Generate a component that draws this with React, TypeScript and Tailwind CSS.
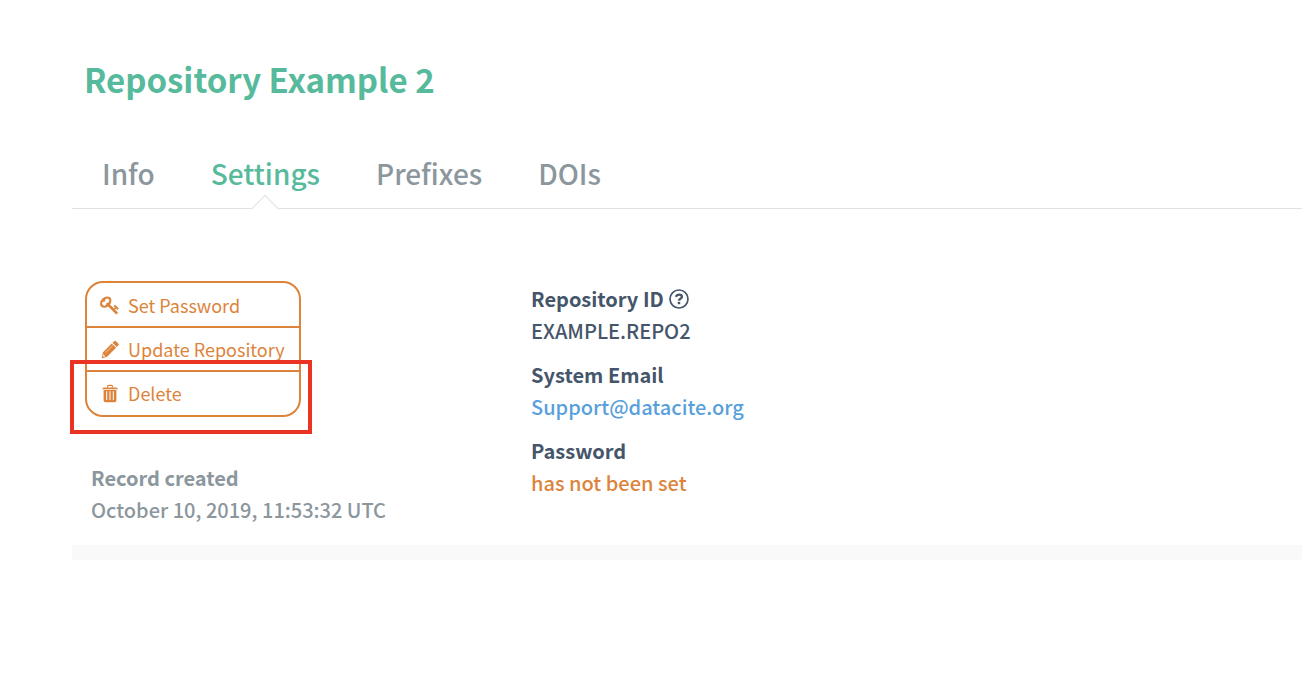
import type { ReactNode } from "react";

const tabs = [
  { label: "Info", active: false },
  { label: "Settings", active: true },
  { label: "Prefixes", active: false },
  { label: "DOIs", active: false },
];

function KeyIcon() {
  return (
    <svg viewBox="0 0 1792 1792" className="h-[22px] w-5" fill="currentColor" aria-hidden="true">
      <path d="M832 512q0-80-56-136t-136-56-136 56-56 136q0 42 19 83-41-19-83-19-80 0-136 56t-56 136 56 136 136 56 136-56 56-136q0-42-19-83 41 19 83 19 80 0 136-56t56-136zm851 704q0 17-49 66t-66 49q-9 0-28.5-16t-36.5-33-38.5-40-24.5-26l-96 96 220 220q28 28 28 68 0 42-39 81t-81 39q-40 0-68-28l-671-671q-176 131-365 131-163 0-265.5-102.5t-102.5-265.5q0-160 95-313t248-248 313-95q163 0 265.5 102.5t102.5 265.5q0 189-131 365l355 355 96-96q-3-3-26-24.5t-40-38.5-33-36.5-16-28.5q0-17 49-66t66-49q13 0 23 10 6 6 46 44.5t82 79.5 86.5 86 73 78 28.5 41z" />
    </svg>
  );
}

function PencilIcon() {
  return (
    <svg viewBox="0 0 20 20" className="h-5 w-5" aria-hidden="true">
      <path
        fill="currentColor"
        d="M14 2.4q1.1-1.1 2.2 0l2.1 2.1q1.1 1 0 2l-1.5 1.6-4.4-4.3zM11.7 4.4l4.4 4.4-9 9-5.4 1.7 1.1-6z"
      />
      <path d="M5.4 13.8l7.4-7.3" stroke="#fff" strokeOpacity="0.65" strokeWidth="0.8" />
      <path d="M3.2 15.1l2.3 2.3-1.9.6-1-1z" fill="#fff" fillOpacity="0.75" />
    </svg>
  );
}

function TrashIcon() {
  return (
    <svg viewBox="0 0 20 20" className="h-5 w-5" fill="none" stroke="currentColor" aria-hidden="true">
      <path d="M7.6 4.6V3.2q0-.9.9-.9h3q.9 0 .9.9v1.4" strokeWidth="1.3" />
      <path d="M2.2 6.2q0-1.8 1.8-1.8h12q1.8 0 1.8 1.8z" fill="currentColor" stroke="none" />
      <path
        fill="currentColor"
        stroke="none"
        fillRule="evenodd"
        d="M3.6 6.9h12.8v10.6q0 1.7-1.8 1.7H5.4q-1.8 0-1.8-1.7zM6.2 8.3v8.8h1V8.3zM9.5 8.3v8.8h1V8.3zM12.8 8.3v8.8h1V8.3z"
      />
    </svg>
  );
}

function HelpIcon() {
  return (
    <svg viewBox="0 0 20 20" className="h-5 w-5" fill="none" stroke="currentColor" aria-hidden="true">
      <circle cx="10" cy="10" r="9" strokeWidth="1.7" />
      <path
        d="M6.7 7.8Q7.8 5.6 10.1 5.6q2.8 0 2.8 2.2 0 1.2-1.5 2-1.3.7-1.3 1.9"
        strokeWidth="2.4"
      />
      <path d="M10 12.9v2.3" strokeWidth="2.5" />
    </svg>
  );
}

const actions = [
  { label: "Set Password", icon: <KeyIcon />, marked: false },
  { label: "Update Repository", icon: <PencilIcon />, marked: false },
  { label: "Delete", icon: <TrashIcon />, marked: true },
];

function Field({ label, children }: { label: ReactNode; children: ReactNode }) {
  return (
    <div className="mb-3">
      <dt className="flex items-center gap-[5px] font-bold">{label}</dt>
      <dd className="font-medium">{children}</dd>
    </div>
  );
}

export default function App() {
  return (
    <main className="overflow-hidden bg-white pt-[55px] pl-18 font-['Noto_Sans_CJK_JP','Noto_Sans_CJK_SC',sans-serif] text-[#45556a]">
      <h1 className="pl-3 text-[33px] leading-12 font-bold text-[#57ba9c]">
        Repository Example 2
      </h1>

      <nav className="mt-[46px] flex border-b border-[#dfe2e4] pb-[11px] pl-[2px] text-[28px] leading-12 font-medium">
        {tabs.map((tab) => (
          <a
            key={tab.label}
            href="#"
            aria-current={tab.active ? "page" : undefined}
            className={
              tab.active
                ? "relative px-7 text-[#57ba9c]"
                : "px-7 text-[#8b969d]"
            }
          >
            {tab.label}
            {tab.active && (
              <span className="absolute -bottom-[22px] left-1/2 h-5 w-5 -translate-x-1/2 rotate-45 border-t border-l border-[#dfe2e4] bg-white" />
            )}
          </a>
        ))}
      </nav>

      <div className="flex border-b-[15px] border-[#f9f9f9] pt-18 pb-[19px]">
        <div className="w-[459px] shrink-0 pl-[13px]">
          <div className="w-54 rounded-[18px] border-2 border-[#dc843b] py-px text-[18px] leading-[42px] text-[#dc843b]">
            {actions.map((action) => (
              <div
                key={action.label}
                className="relative border-b-2 border-[#dc843b] last:border-b-0"
              >
                <button type="button" className="flex w-full items-center gap-2 pl-[13px] text-left whitespace-nowrap">
                  {action.icon}
                  {action.label}
                </button>
                {action.marked && (
                  <span className="pointer-events-none absolute -top-3 -right-[13px] -bottom-5 -left-[17px] border-4 border-[#eb3323]" />
                )}
              </div>
            ))}
          </div>

          <div className="mt-[45px] pl-[6px] text-[20px] leading-8 text-[#8b969d]">
            <h2 className="font-bold">Record created</h2>
            <p className="font-medium">October 10, 2019, 11:53:32 UTC</p>
          </div>
        </div>

        <dl className="pt-[2px] text-[20px] leading-8">
          <Field
            label={
              <>
                Repository ID
                <button type="button" aria-label="About the repository ID">
                  <HelpIcon />
                </button>
              </>
            }
          >
            EXAMPLE.REPO2
          </Field>
          <Field label="System Email">
            <a href="mailto:support@datacite.org" className="text-[#589fdb]">
              Support@datacite.org
            </a>
          </Field>
          <Field label="Password">
            <span className="text-[#dc843b]">has not been set</span>
          </Field>
        </dl>
      </div>
    </main>
  );
}
